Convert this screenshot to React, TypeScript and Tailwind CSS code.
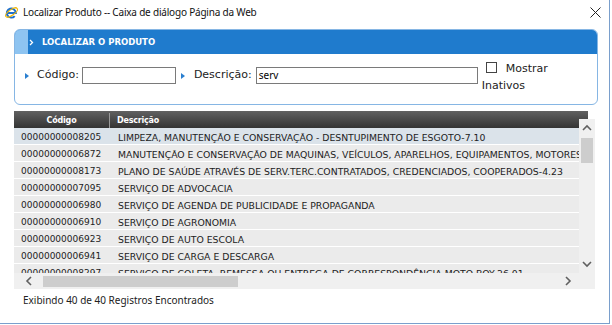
import React from "react";

const rows: [string, string][] = [
  ["00000000008205", "LIMPEZA, MANUTENÇÃO E CONSERVAÇÃO - DESNTUPIMENTO DE ESGOTO-7.10"],
  ["00000000006872", "MANUTENÇÃO E CONSERVAÇÃO DE MAQUINAS, VEÍCULOS, APARELHOS, EQUIPAMENTOS, MOTORES E ELEVADORES"],
  ["00000000008173", "PLANO DE SAÚDE ATRAVÉS DE SERV.TERC.CONTRATADOS, CREDENCIADOS, COOPERADOS-4.23"],
  ["00000000007095", "SERVIÇO DE ADVOCACIA"],
  ["00000000006980", "SERVIÇO DE AGENDA DE PUBLICIDADE E PROPAGANDA"],
  ["00000000006910", "SERVIÇO DE AGRONOMIA"],
  ["00000000006923", "SERVIÇO DE AUTO ESCOLA"],
  ["00000000006941", "SERVIÇO DE CARGA E DESCARGA"],
  ["00000000008297", "SERVIÇO DE COLETA, REMESSA OU ENTREGA DE CORRESPONDÊNCIA-MOTO BOY-26.01"],
];

function Tri() {
  return (
    <svg width="4" height="6" viewBox="0 0 4 6" className="shrink-0">
      <path d="M0 0 L4 3 L0 6 Z" fill="#2a7fd0" />
    </svg>
  );
}

function Chev({ dir }: { dir: "up" | "down" | "left" | "right" }) {
  const d =
    dir === "up"
      ? "M1 6 L5 2 L9 6"
      : dir === "down"
      ? "M1 2 L5 6 L9 2"
      : dir === "left"
      ? "M6 1 L2 5 L6 9"
      : "M2 1 L6 5 L2 9";
  const w = dir === "up" || dir === "down" ? 10 : 8;
  const h = dir === "up" || dir === "down" ? 8 : 10;
  return (
    <svg width={w} height={h} viewBox={`0 0 ${w} ${h}`}>
      <path d={d} fill="none" stroke="#606060" strokeWidth="1.6" />
    </svg>
  );
}

export default function App() {
  return (
    <div className="w-[612px] h-[325px] bg-white overflow-hidden">
      <div className="w-[610px] h-[324px] border-r border-b border-[#7a9fcc] flex flex-col">
        {/* title bar */}
        <div className="h-[24px] flex items-center shrink-0">
          <svg width="15" height="15" viewBox="0 0 16 16" className="ml-[4px]">
            <path
              d="M3.2 8.6 H12.6 A4.8 4.8 0 1 0 11.4 11.8"
              fill="none"
              stroke="#1b6fcf"
              strokeWidth="2.2"
            />
            <ellipse
              cx="8"
              cy="8"
              rx="7.4"
              ry="3"
              transform="rotate(-35 8 8)"
              fill="none"
              stroke="#f2b705"
              strokeWidth="1.2"
            />
          </svg>
          <span className="ml-[4px] mb-[1px] text-[10px] tracking-[-0.2px] text-[#111] font-['Noto_Sans',sans-serif] leading-none">
            Localizar Produto -- Caixa de diálogo Página da Web
          </span>
          <div className="flex-1" />
          <svg width="11" height="11" viewBox="0 0 11 11" className="mr-[8px]">
            <path d="M0.5 0.5 L10.5 10.5 M10.5 0.5 L0.5 10.5" stroke="#222" strokeWidth="1" />
          </svg>
        </div>

        {/* search panel */}
        <div className="ml-[14px] mt-[5px] w-[584px] h-[76px] border border-[#86b6e4] rounded-[6px] flex flex-col shrink-0 font-['DejaVu_Sans',sans-serif]">
          <div className="h-[24px] bg-[#1f7bcd] rounded-t-[5px] flex items-center overflow-hidden">
            <div className="w-[13px] self-stretch bg-[#8ec4f1]" />
            <svg width="5" height="7" viewBox="0 0 5 7" className="ml-[1px]">
              <path d="M1 1 L3.5 3.5 L1 6" fill="none" stroke="#ffffff" strokeWidth="1.3" />
            </svg>
            <span className="ml-[8px] text-[8.5px] font-bold text-white leading-none">
              LOCALIZAR O PRODUTO
            </span>
          </div>
          <div className="flex items-start pl-[10px] text-[11px] text-[#222]">
            <div className="mt-[13px] h-[17px] flex items-center">
              <Tri />
              <span className="ml-[8px]">Código:</span>
              <div className="ml-[3px] w-[94px] h-[17px] border border-[#7a7a7a] bg-white" />
            </div>
            <div className="mt-[13px] h-[17px] flex items-center ml-[5px]">
              <Tri />
              <span className="ml-[9px]">Descrição:</span>
              <div className="ml-[4px] w-[222px] h-[17px] border border-[#7a7a7a] bg-white flex items-center pl-[2px] text-[10px] font-['Noto_Sans',sans-serif] text-[#000]">
                serv
              </div>
            </div>
            <div className="mt-[6px] ml-[4px] w-[74px] leading-[17px]">
              <span className="inline-block align-[-1px] w-[11px] h-[11px] border border-[#444] bg-white ml-[4px] mr-[9px]" />
              Mostrar Inativos
            </div>
          </div>
        </div>

        {/* table */}
        <div className="relative ml-[14px] mt-[6px] w-[581px] h-[178px] overflow-hidden shrink-0 font-['DejaVu_Sans',sans-serif]">
          <div className="w-[574px] h-[17px] pt-[2px] flex bg-linear-to-b from-[#616161] to-[#343434] text-white text-[8px] font-bold tracking-[-0.2px]">
            <div className="w-[96px] border-r border-[#9a9a9a] flex items-center justify-center">Código</div>
            <div className="pl-[7px] flex items-center">Descrição</div>
          </div>
          {rows.map(([c, d], i) => (
            <div
              key={c}
              className={`h-[17px] w-[700px] pt-[3px] flex items-center border-b border-white text-[#222] whitespace-nowrap ${
                i === 0 ? "bg-[#dbe3ea]" : "bg-[#ebebeb]"
              }`}
            >
              <div className="w-[96px] pl-[7px] shrink-0 text-[9px]">{c}</div>
              <div className="pl-[8px] text-[9.3px]">{d}</div>
            </div>
          ))}

          {/* vertical scrollbar */}
          <div className="absolute right-0 top-[8px] w-[16px] h-[154px] bg-[#f0f0f0] flex flex-col items-center">
            <div className="h-[17px] flex items-center justify-center">
              <Chev dir="up" />
            </div>
            <div className="mt-[2px] w-[12px] h-[25px] bg-[#cdcdcd]" />
            <div className="flex-1" />
            <div className="h-[18px] flex items-center justify-center">
              <Chev dir="down" />
            </div>
          </div>
          {/* horizontal scrollbar */}
          <div className="absolute left-0 bottom-0 w-[565px] h-[16px] bg-[#f0f0f0] flex items-center">
            <div className="w-[22px] flex justify-center ml-[4px]">
              <Chev dir="left" />
            </div>
            <div className="ml-[3px] w-[195px] h-[11px] bg-[#cdcdcd]" />
            <div className="flex-1" />
            <div className="w-[18px] flex justify-center mr-[2px]">
              <Chev dir="right" />
            </div>
          </div>
          <div className="absolute right-0 bottom-0 w-[16px] h-[16px] bg-[#f0f0f0]" />
        </div>

        <div className="ml-[23px] mt-[5px] text-[10px] leading-[12px] text-[#222] font-['Noto_Sans',sans-serif]">
          Exibindo 40 de 40 Registros Encontrados
        </div>
      </div>
    </div>
  );
}
